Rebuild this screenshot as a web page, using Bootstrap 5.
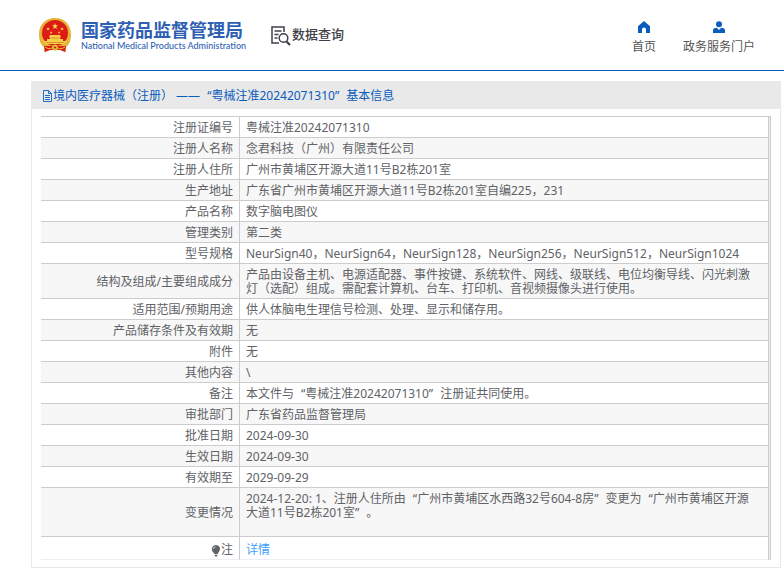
<!DOCTYPE html>
<html lang="zh-CN">
<head>
<meta charset="utf-8">
<meta name="viewport" content="width=device-width, initial-scale=1">
<title>国家药品监督管理局 数据查询</title>
<link href="https://cdn.jsdelivr.net/npm/bootstrap@5.3.0/dist/css/bootstrap.min.css" rel="stylesheet">
<style>
body{font-family:"Noto Sans","Noto Sans CJK SC",sans-serif;font-size:12px;line-height:14px;color:#606266;background:#fff}
.quote-open{padding-left:7px}
.quote-close{padding-right:7px}
.site-head{height:71px;border-bottom:1px solid #0a5cbd}
.emblem{margin-left:38px}
.brand-name{margin-left:9px}
.brand-zh{font-family:"Noto Sans CJK SC",sans-serif;font-size:18px;line-height:22px;font-weight:700;color:#2f5fb3}
.brand-en{font-family:Lato,sans-serif;font-size:9px;line-height:12px;font-weight:500;color:#2f5fb3}
.query{font-family:"Noto Sans CJK SC",sans-serif;font-size:13px;line-height:20px;font-weight:500;color:#404048;padding-bottom:2px}
.top-links{margin-right:29px;gap:27px;padding-top:6px}
.top-links a{color:#555;line-height:18px}
.panel{margin:10px 3px 5px 31px;border:1px solid #e9e9e9}
.panel-title{font-size:12px;line-height:17px;color:#0a5cbd;background:#e9e9e9;padding:5px 10px}
.frame{margin:7px 9px 7px;border:solid #ccc;border-width:1px 1px 0 0;padding-right:1px;background:#ebeef5}
.info{border-collapse:separate;border-spacing:0;border-right:1px solid #ccc;background:#fff}
.info th,.info td{padding:4px 6px 2px;border-bottom:1px solid #ccc;font-weight:400;vertical-align:middle}
.info th{width:198px;text-align:right;padding-left:0}
.info td{border-left:1px solid #ccc;padding-right:9px}
.info tr:nth-child(even)>*{background:#f7f7f7}
.info .history{padding-bottom:16px}
.info tr:last-child>*{border-bottom-color:#ebeef5;padding-top:6px;padding-bottom:2px}
.info a{color:#409eff}
</style>
<script src="https://cdn.jsdelivr.net/npm/bootstrap@5.3.0/dist/js/bootstrap.bundle.min.js"></script>
</head>
<body>
<header class="site-head d-flex align-items-center">
  <svg class="emblem flex-shrink-0" width="34" height="36" viewBox="0 0 34 36" aria-hidden="true">
    <path d="M17 1C7 1 1 8 1 17c0 7 2 11 5 13v5l5-2h12l5 2v-5c3-2 5-6 5-13C33 8 27 1 17 1z" fill="#e4b637"/>
    <path d="M6 29h22l-1 6-5-2H12l-5 2z" fill="#d51f17"/>
    <circle cx="17" cy="16" r="13" fill="#dc1b16"/>
    <path d="M17 6l.8 2.300h2.300l-1.900 1.500.8 2.300-2-1.400-2 1.400.8-2.300-1.900-1.500h2.300z" fill="#fbd64a"/>
    <path d="M10 10l.5 1.200H12l-1 .9.400 1.400-1.400-.8-1.200.8.300-1.400-1-.9h1.400zM24 10l.5 1.200H26l-1 .9.400 1.400-1.400-.8-1.200.8.300-1.400-1-.9h1.400zM13 14l.4 1h1l-.8.7.3 1-.9-.5-.9.5.3-1-.8-.7h1zM21 14l.4 1h1l-.8.7.3 1-.9-.5-.9.5.3-1-.8-.7h1z" fill="#f8c83e"/>
    <path d="M12 18h10l1 2-1 .5V22h3v2h4l-3 3H8l-3-3h4v-2h3v-1.500l-1-.5z" fill="#f6ce49"/>
    <path d="M8 25.500h18M13 21h8" stroke="#cf7a1c" stroke-width=".7"/>
    <circle cx="17" cy="30.500" r="3" fill="#e9b52f"/><circle cx="17" cy="30.500" r="1.100" fill="#c82018"/>
    <path d="M7 30c3 2 5 2 7 1M27 30c-3 2-5 2-7 1" stroke="#f3bd38" fill="none"/>
  </svg>
  <div class="brand-name text-nowrap">
    <div class="brand-zh">国家药品监督管理局</div>
    <div class="brand-en">National Medical Products Administration</div>
  </div>
  <div class="query d-flex align-items-center ms-4 text-nowrap">
    <svg class="mt-1" width="22" height="20" viewBox="0 0 22 20" fill="none" stroke="#404048" stroke-width="1.500" aria-hidden="true">
      <path d="M14 6V1H2v16h7"/><path d="M4.500 5h7M4.500 8.500h4M4.500 12h3" stroke-width="1.300"/>
      <circle cx="13.500" cy="12" r="4.300"/><path d="M16.500 15.500l3.500 3.500" stroke-width="2.200"/>
    </svg>数据查询
  </div>
  <nav class="top-links d-flex ms-auto text-center text-nowrap" aria-label="导航">
    <a class="text-decoration-none d-flex flex-column align-items-center" href="#"><svg class="mb-1" width="14" height="13" viewBox="0 0 14 13" aria-hidden="true"><path d="M7 0l6 5.200V12H9V8.500a2 2 0 0 0-4 0V12H1V5.200z" fill="#0a5cbd"/></svg>首页</a>
    <a class="text-decoration-none d-flex flex-column align-items-center" href="#"><svg class="mb-1" width="14" height="13" viewBox="0 0 14 13" aria-hidden="true"><circle cx="7" cy="3.200" r="3" fill="#0a5cbd"/><path d="M1 12V9.500Q1 7 4.800 6.800L7 9l2.200-2.200Q13 7 13 9.500V12z" fill="#0a5cbd"/></svg>政务服务门户</a>
  </nav>
</header>
<main class="panel">
  <h1 class="panel-title d-flex align-items-center m-0 fw-normal">
    <svg class="flex-shrink-0" width="11" height="12" viewBox="0 0 11 12" fill="none" stroke="#0a5cbd" aria-hidden="true"><path d="M1.500.5h5l3 3v8h-8zM6.500.5v3h3M3 5.500h5M3 7.500h5M3 9.500h5" stroke-width=".9"/></svg>
    <span>境内医疗器械（注册） ——<span class="quote-open">“</span>粤械注准20242071310<span class="quote-close">”</span>基本信息</span>
  </h1>
  <div class="frame">
    <table class="info w-100">
      <tbody>
        <tr><th scope="row">注册证编号</th><td>粤械注准20242071310</td></tr>
        <tr><th scope="row">注册人名称</th><td>念君科技（广州）有限责任公司</td></tr>
        <tr><th scope="row">注册人住所</th><td>广州市黄埔区开源大道11号B2栋201室</td></tr>
        <tr><th scope="row">生产地址</th><td>广东省广州市黄埔区开源大道11号B2栋201室自编225，231</td></tr>
        <tr><th scope="row">产品名称</th><td>数字脑电图仪</td></tr>
        <tr><th scope="row">管理类别</th><td>第二类</td></tr>
        <tr><th scope="row">型号规格</th><td>NeurSign40，NeurSign64，NeurSign128，NeurSign256，NeurSign512，NeurSign1024</td></tr>
        <tr><th scope="row">结构及组成/主要组成成分</th><td>产品由设备主机、电源适配器、事件按键、系统软件、网线、级联线、电位均衡导线、闪光刺激灯（选配）组成。需配套计算机、台车、打印机、音视频摄像头进行使用。</td></tr>
        <tr><th scope="row">适用范围/预期用途</th><td>供人体脑电生理信号检测、处理、显示和储存用。</td></tr>
        <tr><th scope="row">产品储存条件及有效期</th><td>无</td></tr>
        <tr><th scope="row">附件</th><td>无</td></tr>
        <tr><th scope="row">其他内容</th><td>\</td></tr>
        <tr><th scope="row">备注</th><td>本文件与<span class="quote-open">“</span>粤械注准20242071310<span class="quote-close">”</span>注册证共同使用。</td></tr>
        <tr><th scope="row">审批部门</th><td>广东省药品监督管理局</td></tr>
        <tr><th scope="row">批准日期</th><td>2024-09-30</td></tr>
        <tr><th scope="row">生效日期</th><td>2024-09-30</td></tr>
        <tr><th scope="row">有效期至</th><td>2029-09-29</td></tr>
        <tr><th scope="row">变更情况</th><td class="history">2024-12-20: 1、注册人住所由<span class="quote-open">“</span>广州市黄埔区水西路32号604-8房<span class="quote-close">”</span>变更为<span class="quote-open">“</span>广州市黄埔区开源大道11号B2栋201室<span class="quote-close">”</span>。</td></tr>
        <tr><th scope="row"><svg width="10" height="12" viewBox="0 0 10 12" aria-hidden="true"><path d="M5 0a4.200 4.200 0 0 1 2.500 7.500L6.500 9h-3l-1-1.500A4.200 4.200 0 0 1 5 0zM3.500 9.700h3L6 11.500H4z" fill="#606266"/><path d="M2.500 4Q2.700 2 4.500 1.800" stroke="#fff" stroke-width=".7" fill="none"/></svg>注</th><td><a class="text-decoration-none" href="#">详情</a></td></tr>
      </tbody>
    </table>
  </div>
</main>
</body>
</html>
